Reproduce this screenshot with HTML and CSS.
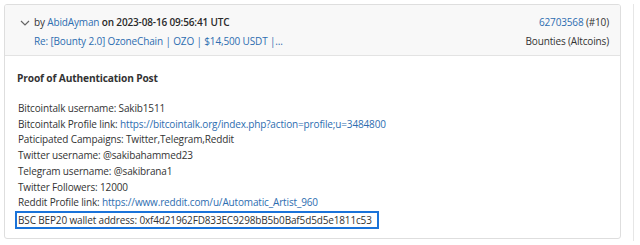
FILE: index.html
```html
<!DOCTYPE html>
<html lang="en">
  <head>
    <meta charset="UTF-8">
    <title>Post</title>
    <link rel="stylesheet" href="styles.css">
  </head>
  <body>
    <div class="page">
      <div class="post">
        <div class="post-header">
          <div class="meta">
            <div class="meta-line">
              <svg class="chevron" width="10" height="6" viewBox="0 0 10 6"><path d="M1 1 L5 5 L9 1" fill="none" stroke="#666" stroke-width="1.2"/></svg>
              <span>by <a href="#">AbidAyman</a> <span class="date">on 2023-08-16 09:56:41 UTC</span></span>
            </div>
            <div class="meta-line sub">
              <a href="#">Re: [Bounty 2.0] OzoneChain | OZO | $14,500 USDT |...</a>
            </div>
          </div>
          <div class="ids">
            <div><a href="#">62703568</a> (#10)</div>
            <div>Bounties (Altcoins)</div>
          </div>
        </div>
        <div class="post-body">
          <div class="title">Proof of Authentication Post</div>
          <div class="lines">
            <div>Bitcointalk username: Sakib1511</div>
            <div>Bitcointalk Profile link: <a href="#">https://bitcointalk.org/index.php?action=profile;u=3484800</a></div>
            <div>Paticipated Campaigns: Twitter,Telegram,Reddit</div>
            <div>Twitter username: @sakibahammed23</div>
            <div>Telegram username: @sakibrana1</div>
            <div>Twitter Followers: 12000</div>
            <div>Reddit Profile link: <a href="#">https://www.reddit.com/u/Automatic_Artist_960</a></div>
            <div class="selected">BSC BEP20 wallet address: 0xf4d21962FD833EC9298bB5b0Baf5d5d5e1811c53</div>
          </div>
        </div>
      </div>
      <div class="side"></div>
    </div>
  </body>
</html>
```

FILE: styles.css
```css
body {
  margin: 0;
  background: #fff;
  font-family: "Open Sans", "Noto Sans", sans-serif;
  font-size: 10px;
  letter-spacing: -0.15px;
  color: #333;
}

a {
  color: #2d6db0;
  text-decoration: none;
}

.page {
  display: flex;
  padding: 4px 0 0 4px;
  height: 241px;
  box-sizing: border-box;
}

.post {
  width: 617px;
  height: 235px;
  box-sizing: border-box;
  border: 1px solid #dedede;
  border-radius: 3px;
  overflow: hidden;
}

.side {
  margin-left: 12px;
  border-left: 1px solid #e6e6e6;
}

.post-header {
  display: flex;
  justify-content: space-between;
  background: #f8f8f8;
  border-bottom: 1px solid #e3e3e3;
  height: 51px;
  box-sizing: border-box;
  padding: 8px 11px 0 15px;
}

.meta-line {
  display: flex;
  align-items: center;
  height: 19px;
  line-height: 19px;
}

.meta-line.sub {
  padding-left: 14px;
}

.chevron {
  margin-right: 4px;
}

.date {
  color: #2a2a2a;
  font-weight: 600;
}

.ids {
  text-align: right;
  line-height: 19px;
}

.post-body {
  padding: 13px 12px 0 12px;
}

.title {
  font-weight: bold;
  font-size: 10.2px;
  line-height: 18px;
  margin-bottom: 14px;
}

.lines div {
  line-height: 15.7px;
  padding: 0 1px;
}

.lines .selected {
  display: inline-block;
  border: 2px solid #1a73d9;
  line-height: 14px;
  margin-left: -2px;
  padding: 0 5px 0 1px;
}
```
